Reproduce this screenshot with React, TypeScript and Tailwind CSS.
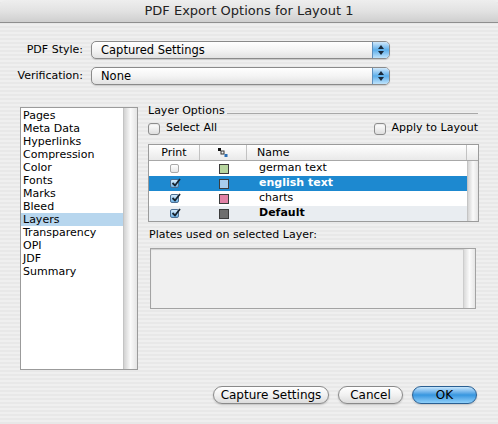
import React from 'react';

const font = { fontFamily: '"DejaVu Sans", "Liberation Sans", sans-serif' };

const sections = [
  'Pages',
  'Meta Data',
  'Hyperlinks',
  'Compression',
  'Color',
  'Fonts',
  'Marks',
  'Bleed',
  'Layers',
  'Transparency',
  'OPI',
  'JDF',
  'Summary',
];

const layers = [
  { name: 'german text', color: 'bg-[#b7d59f]', print: false, selected: false, bold: false },
  { name: 'english text', color: 'bg-[#a8cdec]', print: true, selected: true, bold: true },
  { name: 'charts', color: 'bg-[#e282a6]', print: true, selected: false, bold: false },
  { name: 'Default', color: 'bg-[#6e6e6e]', print: true, selected: false, bold: true },
];

function PopupButton({ value }: { value: string }) {
  return (
    <div className="flex h-[18px] w-[299px] items-stretch rounded-[5px] border border-[#8a8a8a] bg-gradient-to-b from-white via-[#f4f4f4] to-[#e2e2e2] shadow-[0_1px_1px_rgba(0,0,0,0.15)]">
      <span className="flex-1 pl-[9px] text-[11.5px] leading-[16px] text-black">{value}</span>
      <span className="flex w-[17px] flex-col items-center justify-center gap-[2px] rounded-r-[4px] border-l border-[#5d8fbd] bg-gradient-to-b from-[#cfe8fb] via-[#5aaeea] to-[#bfe3fb]">
        <svg width="6" height="4" viewBox="0 0 6 4">
          <path d="M3 0 L6 4 L0 4 Z" fill="#1b2a3a" />
        </svg>
        <svg width="6" height="4" viewBox="0 0 6 4">
          <path d="M0 0 L6 0 L3 4 Z" fill="#1b2a3a" />
        </svg>
      </span>
    </div>
  );
}

function Checkbox({ size = 12 }: { size?: number }) {
  return (
    <span
      className="inline-block rounded-[3px] border border-[#8d8d8d] bg-gradient-to-b from-white to-[#dedede] shadow-[inset_0_1px_1px_rgba(0,0,0,0.08)]"
      style={{ width: size, height: size }}
    />
  );
}

function SmallCheck({ checked }: { checked: boolean }) {
  if (!checked) {
    return <span className="inline-block h-[9px] w-[9px] rounded-[2px] border border-[#a9a9a9] bg-gradient-to-b from-white to-[#e6e6e6]" />;
  }
  return (
    <span className="relative inline-block h-[9px] w-[9px] rounded-[2px] border border-[#4c6f93] bg-gradient-to-b from-[#d8ecfb] to-[#6fb3e6]">
      <svg className="absolute -top-[2px] left-0" width="10" height="10" viewBox="0 0 10 10">
        <path d="M1.5 5 L4 7.5 L9 1" stroke="#16222e" strokeWidth="1.8" fill="none" />
      </svg>
    </span>
  );
}

function LayerIcon() {
  return (
    <svg width="10" height="9" viewBox="0 0 10 9">
      <rect x="0" y="0" width="3" height="3" fill="#111" />
      <rect x="3" y="3" width="3" height="3" fill="none" stroke="#333" strokeWidth="1" />
      <rect x="6.5" y="6" width="3" height="3" fill="#2a6fb5" />
    </svg>
  );
}

function AquaButton({ label, primary, width }: { label: string; primary?: boolean; width: string }) {
  const cls = primary
    ? 'border-[#2a5f92] bg-gradient-to-b from-[#c6e6fc] via-[#3596df] to-[#8fd0fa] text-black'
    : 'border-[#8a8a8a] bg-gradient-to-b from-white via-[#f1f1f1] to-[#dcdcdc] text-black';
  return (
    <button
      className={`flex h-[18px] items-center justify-center rounded-full border text-[12px] leading-none shadow-[0_1px_2px_rgba(0,0,0,0.2)] ${cls} ${width}`}
    >
      {label}
    </button>
  );
}

export default function App() {
  return (
    <div
      className="flex h-[424px] w-[498px] flex-col overflow-hidden bg-[repeating-linear-gradient(180deg,#efefef_0px,#efefef_2px,#e8e8e8_2px,#e8e8e8_4px)] text-black"
      style={font}
    >
      {/* title bar */}
      <div className="flex h-[23px] shrink-0 items-center justify-center rounded-t-[6px] border-b border-[#8f8f8f] bg-gradient-to-b from-[#eeeeee] via-[#e2e2e2] to-[#cfcfcf] text-[13px] text-[#222]">
        PDF Export Options for Layout 1
      </div>

      {/* popups */}
      <div className="mt-[18px] flex flex-col gap-[8px]">
        <div className="flex items-center gap-[8px]">
          <span className="w-[83px] text-right text-[11px]">PDF Style:</span>
          <PopupButton value="Captured Settings" />
        </div>
        <div className="flex items-center gap-[8px]">
          <span className="w-[83px] text-right text-[11px]">Verification:</span>
          <PopupButton value="None" />
        </div>
      </div>

      {/* main */}
      <div className="mt-[19px] flex items-start pl-[20px]">
        {/* section list */}
        <div className="mt-[3px] flex h-[263px] w-[118px] border border-[#9b9b9b] bg-white">
          <div className="flex flex-1 flex-col pt-[1px]">
            {sections.map((s) => (
              <div
                key={s}
                className={`h-[13px] pl-[2px] text-[11px] leading-[13px] ${s === 'Layers' ? 'bg-[#b7d6ee]' : ''}`}
              >
                {s}
              </div>
            ))}
          </div>
          <div className="w-[14px] border-l border-[#c4c4c4] bg-gradient-to-r from-[#d2d2d2] via-[#fafafa] to-[#e4e4e4]" />
        </div>

        {/* layer options */}
        <div className="ml-[10px] flex w-[330px] flex-col">
          <div className="flex h-[14px] items-center gap-[2px] text-[11px]">
            <span>Layer Options</span>
            <span className="mt-[4px] h-px flex-1 bg-[#a8a8a8]" />
          </div>

          <div className="mt-[3px] flex h-[15px] items-center justify-between text-[11px]">
            <label className="flex items-center gap-[6px]">
              <Checkbox />
              Select All
            </label>
            <label className="flex items-center gap-[6px]">
              <Checkbox />
              Apply to Layout
            </label>
          </div>

          {/* table */}
          <div className="mt-[8px] flex w-[331px] flex-col border border-[#9b9b9b] bg-white">
            <div className="flex h-[16px] border-b border-[#a8a8a8] bg-gradient-to-b from-white to-[#e9e9e9] text-[11px]">
              <span className="w-[51px] border-r border-[#c2c2c2] text-center leading-[15px]">Print</span>
              <span className="flex w-[47px] items-center justify-center border-r border-[#c2c2c2]">
                <LayerIcon />
              </span>
              <span className="flex-1 border-r border-[#c2c2c2] pl-[10px] leading-[15px]">Name</span>
              <span className="w-[11px]" />
            </div>
            <div className="flex">
              <div className="flex flex-1 flex-col">
                {layers.map((l, i) => (
                  <div
                    key={l.name}
                    className={`flex h-[15px] items-center text-[11px] ${
                      l.selected ? 'bg-[#1d89d0] text-white' : i === 3 ? 'bg-[#e9edf1]' : 'bg-white'
                    }`}
                  >
                    <span className="flex w-[51px] justify-center">
                      <SmallCheck checked={l.print} />
                    </span>
                    <span className="flex w-[47px] justify-center pl-[1px]">
                      <span className={`h-[10px] w-[10px] border border-[#3c3c3c] ${l.color}`} />
                    </span>
                    <span className={`pl-[12px] ${l.bold ? 'font-bold' : ''}`}>{l.name}</span>
                  </div>
                ))}
              </div>
              <div className="w-[11px] border-l border-[#c4c4c4] bg-gradient-to-r from-[#d4d4d4] via-[#fafafa] to-[#e4e4e4]" />
            </div>
          </div>

          <div className="mt-[6px] pl-[1px] text-[11px] leading-[14px]">Plates used on selected Layer:</div>

          <div className="ml-[2px] mt-[6px] flex h-[61px] w-[326px] border border-[#a3a3a3] bg-[#f0f0f0] shadow-[inset_0_1px_1px_rgba(0,0,0,0.15)]">
            <div className="flex-1" />
            <div className="w-[12px] border-l border-[#cdcdcd] bg-gradient-to-r from-[#dadada] via-[#fbfbfb] to-[#e6e6e6]" />
          </div>
        </div>
      </div>

      {/* buttons */}
      <div className="mt-[16px] flex justify-end gap-[9px] pr-[21px]">
        <AquaButton label="Capture Settings" width="w-[116px]" />
        <AquaButton label="Cancel" width="w-[65px]" />
        <AquaButton label="OK" primary width="w-[65px]" />
      </div>
    </div>
  );
}
